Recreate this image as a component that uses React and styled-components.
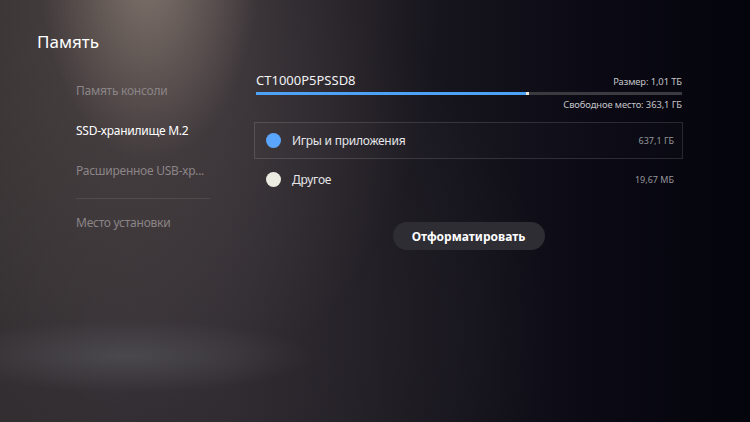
import React from 'react'
import styled, { createGlobalStyle } from 'styled-components'

const GlobalStyle = createGlobalStyle`
  html, body {
    margin: 0;
    padding: 0;
    background: #05050d;
  }
  body {
    font-family: "Noto Sans", "Open Sans", sans-serif;
    -webkit-font-smoothing: antialiased;
  }
`

const menu = [
  { label: 'Память консоли' },
  { label: 'SSD-хранилище M.2', active: true },
  { label: 'Расширенное USB-хр...' },
  { divider: true },
  { label: 'Место установки' },
]

const parts = [
  { name: 'Игры и приложения', size: '637,1 ГБ', color: '#5aa6ff', selected: true },
  { name: 'Другое', size: '19,67 МБ', color: '#ecebe2' },
]

function App() {
  const used = 63.3

  return (
    <>
      <GlobalStyle />
      <Screen>
        <Sidebar>
          <Title>Память</Title>
          <Menu>
            {menu.map((item, i) =>
              item.divider ? (
                <Divider key={i} />
              ) : (
                <MenuItem key={i} active={item.active}>{item.label}</MenuItem>
              )
            )}
          </Menu>
        </Sidebar>

        <Main>
          <DriveHeader>
            <DriveName>CT1000P5PSSD8</DriveName>
            <SmallInfo>Размер: 1,01 ТБ</SmallInfo>
          </DriveHeader>
          <Bar>
            <BarFill style={{ width: used + '%' }} />
            <BarOther />
          </Bar>
          <FreeRow>
            <SmallInfo>Свободное место: 363,1 ГБ</SmallInfo>
          </FreeRow>

          <List>
            {parts.map((p) => (
              <Row key={p.name} selected={p.selected}>
                <Dot color={p.color} />
                <RowName>{p.name}</RowName>
                <RowSize>{p.size}</RowSize>
              </Row>
            ))}
          </List>

          <ButtonWrap>
            <FormatButton>Отформатировать</FormatButton>
          </ButtonWrap>
        </Main>
      </Screen>
    </>
  )
}

export default App

const Screen = styled.div`
  width: 750px;
  height: 422px;
  overflow: hidden;
  display: flex;
  background:
    radial-gradient(ellipse 190px 36px at 125px 356px, rgba(110, 116, 124, 0.32), rgba(110, 116, 124, 0) 100%),
    radial-gradient(ellipse 110px 190px at 150px -30px, rgba(205, 185, 165, 0.4), rgba(205, 185, 165, 0) 100%),
    radial-gradient(ellipse 300px 420px at 140px -10px, rgba(150, 132, 122, 0.3), rgba(150, 132, 122, 0) 100%),
    radial-gradient(ellipse 420px 380px at 130px 330px, rgba(70, 64, 68, 0.45), rgba(70, 64, 68, 0) 100%),
    linear-gradient(90deg, #2b2729 0%, #27232a 30%, #18161e 55%, #0b0a14 80%, #04040c 100%);
`

const Sidebar = styled.div`
  width: 254px;
  flex-shrink: 0;
  box-sizing: border-box;
  padding: 31px 0 0 37px;
`

const Title = styled.div`
  font-size: 17px;
  line-height: 22px;
  color: #ffffff;
`

const Menu = styled.div`
  margin: 18px 0 0 39px;
  display: flex;
  flex-direction: column;
  width: 134px;
`

const MenuItem = styled.div`
  height: 40px;
  line-height: 40px;
  font-size: 12px;
  letter-spacing: -0.25px;
  white-space: nowrap;
  color: ${(p) => (p.active ? '#ffffff' : '#8b8587')};
`

const Divider = styled.div`
  height: 1px;
  margin: 7px 0 4px;
  background: rgba(255, 255, 255, 0.09);
`

const Main = styled.div`
  width: 429px;
  padding-top: 71px;
  display: flex;
  flex-direction: column;
`

const DriveHeader = styled.div`
  display: flex;
  justify-content: space-between;
  align-items: baseline;
  padding: 0 1px 0 2px;
  height: 18px;
`

const DriveName = styled.div`
  font-size: 13px;
  line-height: 18px;
  color: #f2f2f4;
`

const SmallInfo = styled.div`
  font-size: 9.4px;
  line-height: 14px;
  letter-spacing: -0.1px;
  color: #c4c4c8;
`

const Bar = styled.div`
  margin: 3px 1px 0 2px;
  height: 3px;
  display: flex;
  background: #3a3a40;
`

const BarFill = styled.div`
  background: #4ea2f5;
`

const BarOther = styled.div`
  width: 3px;
  background: #efe6cf;
`

const FreeRow = styled.div`
  display: flex;
  justify-content: flex-end;
  padding-right: 1px;
  margin-top: 3px;
`

const List = styled.div`
  margin-top: 10px;
  display: flex;
  flex-direction: column;
  gap: 2px;
`

const Row = styled.div`
  height: 37px;
  box-sizing: border-box;
  display: flex;
  align-items: center;
  padding: 0 8px 0 11px;
  border: 1px solid ${(p) => (p.selected ? 'rgba(255, 255, 255, 0.13)' : 'transparent')};
  background: ${(p) => (p.selected ? 'rgba(255, 255, 255, 0.015)' : 'transparent')};
`

const Dot = styled.span`
  width: 15px;
  height: 15px;
  border-radius: 50%;
  background: ${(p) => p.color};
  flex-shrink: 0;
`

const RowName = styled.span`
  margin-left: 11px;
  flex: 1;
  font-size: 12px;
  letter-spacing: -0.25px;
  color: #e6e6ea;
`

const RowSize = styled.span`
  font-size: 9px;
  color: #95959b;
`

const ButtonWrap = styled.div`
  display: flex;
  justify-content: center;
  margin-top: 24px;
`

const FormatButton = styled.button`
  width: 152px;
  height: 28px;
  border: none;
  border-radius: 14px;
  background: #2d2d33;
  color: #ffffff;
  font-family: "Noto Sans", "Open Sans", sans-serif;
  font-weight: 700;
  font-size: 12px;
  padding: 0;
`
